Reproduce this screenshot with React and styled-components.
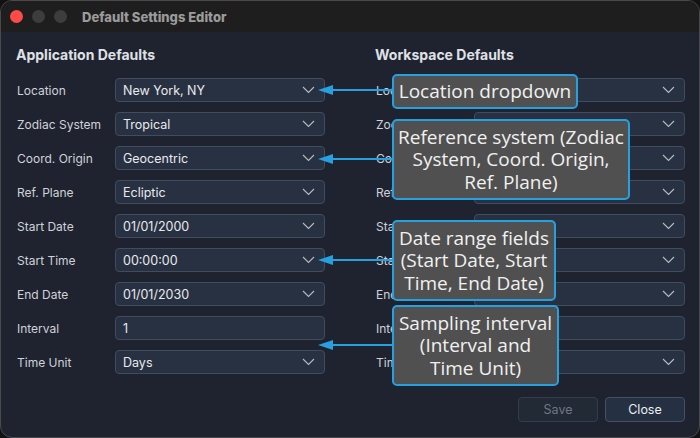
import React from 'react'
import styled, { createGlobalStyle } from 'styled-components'

const GlobalStyle = createGlobalStyle`
    html, body {
        margin: 0;
        padding: 0;
        background: #121212;
    }
    * {
        box-sizing: border-box;
    }
`

const Window = styled.div`
    position: relative;
    width: 700px;
    height: 438px;
    border: 1px solid #4a4a4c;
    border-radius: 12px;
    overflow: hidden;
    background: #1f2330;
    display: flex;
    flex-direction: column;
    font-family: Inter, "Liberation Sans", sans-serif;
`
const TitleBar = styled.div`
    height: 31px;
    flex-shrink: 0;
    background: #1e1e1e;
    display: flex;
    align-items: center;
    padding-left: 9px;
    gap: 9px;
`
const Light = styled.span`
    width: 13px;
    height: 13px;
    border-radius: 50%;
    background: ${props => props.color};
`
const WindowTitle = styled.div`
    margin-left: 6px;
    font-size: 13px;
    font-weight: 800;
    color: #9b9b9b;
`
const Body = styled.div`
    flex: 1;
    display: flex;
    flex-direction: column;
    padding: 14px 14px 15px 15px;
`
const Columns = styled.div`
    display: grid;
    grid-template-columns: 309px 310px;
    column-gap: 50px;
`
const Column = styled.div`
    display: flex;
    flex-direction: column;
`
const Heading = styled.h2`
    margin: 0 0 14px;
    font-size: 14px;
    line-height: 18px;
    font-weight: 700;
    color: #dfe1e5;
`
const Rows = styled.div`
    display: flex;
    flex-direction: column;
    gap: 10px;
`
const Row = styled.div`
    display: flex;
    align-items: center;
    height: 24px;
`
const Label = styled.div`
    width: 99px;
    padding-left: 1px;
    font-size: 12px;
    color: #cfd2d8;
`
const Field = styled.div`
    flex: 1;
    height: 24px;
    display: flex;
    align-items: center;
    justify-content: space-between;
    padding: 0 9px 0 7px;
    background: #283141;
    border: 1px solid #414c5f;
    border-radius: 4px;
    font-size: 12.5px;
    color: #e8eaee;
`
const Footer = styled.div`
    margin-top: auto;
    display: flex;
    justify-content: flex-end;
    gap: 7px;
`
const Button = styled.button`
    width: 80px;
    height: 25px;
    border-radius: 4px;
    font-family: inherit;
    font-size: 12.5px;
    background: ${props => props.disabled ? '#222a36' : '#253042'};
    border: 1px solid ${props => props.disabled ? '#343d4c' : '#445068'};
    color: ${props => props.disabled ? '#6f7784' : '#eceef2'};
`
const Callout = styled.div`
    position: absolute;
    left: ${props => props.left}px;
    top: ${props => props.top}px;
    width: ${props => props.width}px;
    height: ${props => props.height}px;
    display: flex;
    align-items: center;
    justify-content: center;
    text-align: center;
    padding: 0 4px;
    background: #505050;
    border: 2px solid #26a0de;
    border-radius: 5px;
    font-family: "Open Sans", "Noto Sans", sans-serif;
    font-size: 19px;
    line-height: 22.5px;
    color: #f0f0f0;
`
const Arrows = styled.svg`
    position: absolute;
    left: 0;
    top: 0;
    pointer-events: none;
`

const Chevron = () => (
    <svg width="13" height="8" viewBox="0 0 13 8">
        <path d="M1 1 L6.5 6.5 L12 1" fill="none" stroke="#b6bac2" strokeWidth="1.1" />
    </svg>
)

const fields = [
    ['Location', 'New York, NY', true],
    ['Zodiac System', 'Tropical', true],
    ['Coord. Origin', 'Geocentric', true],
    ['Ref. Plane', 'Ecliptic', true],
    ['Start Date', '01/01/2000', true],
    ['Start Time', '00:00:00', true],
    ['End Date', '01/01/2030', true],
    ['Interval', '1', false],
    ['Time Unit', 'Days', true],
]

function Section({ title, withValues }) {
    return (
        <Column>
            <Heading>{title}</Heading>
            <Rows>
                {fields.map(([label, value, select]) => (
                    <Row key={label}>
                        <Label>{label}</Label>
                        <Field>
                            <span>{withValues ? value : ''}</span>
                            {select && <Chevron />}
                        </Field>
                    </Row>
                ))}
            </Rows>
        </Column>
    )
}

const arrowYs = [90, 159, 260, 345]

export default function App() {
    return (
        <>
            <GlobalStyle />
            <Window>
                <TitleBar>
                    <Light color="#ff4a4a" />
                    <Light color="#3d3d3d" />
                    <Light color="#3d3d3d" />
                    <WindowTitle>Default Settings Editor</WindowTitle>
                </TitleBar>
                <Body>
                    <Columns>
                        <Section title="Application Defaults" withValues />
                        <Section title="Workspace Defaults" />
                    </Columns>
                    <Footer>
                        <Button disabled>Save</Button>
                        <Button>Close</Button>
                    </Footer>
                </Body>

                <Arrows width="700" height="438">
                    {arrowYs.map(y => (
                        <g key={y}>
                            <line x1="330" y1={y - 1} x2="394" y2={y - 1} stroke="#26a0de" strokeWidth="2" />
                            <polygon points={`317,${y - 1} 332,${y - 6} 332,${y + 4}`} fill="#26a0de" />
                        </g>
                    ))}
                </Arrows>

                <Callout left={391} top={73} width={186} height={35}>Location dropdown</Callout>
                <Callout left={391} top={118} width={238} height={81}>Reference system (Zodiac System, Coord. Origin, Ref. Plane)</Callout>
                <Callout left={391} top={219} width={164} height={81}>Date range fields (Start Date, Start Time, End Date)</Callout>
                <Callout left={391} top={304} width={167} height={81}>Sampling interval (Interval and Time Unit)</Callout>
            </Window>
        </>
    )
}
